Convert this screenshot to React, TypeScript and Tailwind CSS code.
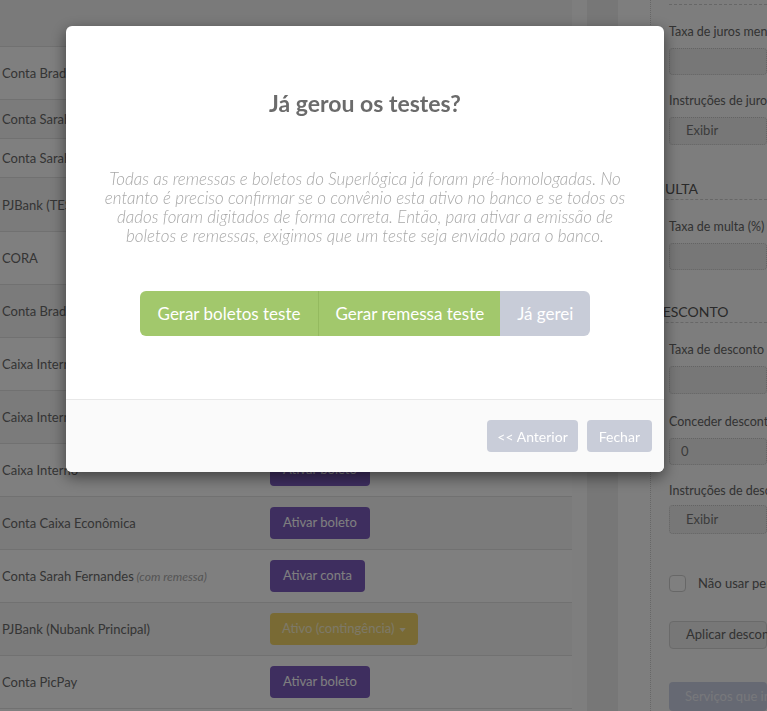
import React from "react";

type Row = {
  name: string;
  note?: string;
  action?: "boleto" | "conta" | "ativo";
  h: string;
};

const ROWS: Row[] = [
  { name: "Conta Bradesco", action: "boleto", h: "h-[53px]" },
  { name: "Conta Sarah Fernandes", h: "h-[39px]" },
  { name: "Conta Sarah Fernandes", h: "h-[39px]" },
  { name: "PJBank (TESTE)", action: "boleto", h: "h-[54px]" },
  { name: "CORA", action: "boleto", h: "h-[53px]" },
  { name: "Conta Bradesco", action: "boleto", h: "h-[53px]" },
  { name: "Caixa Interno", action: "boleto", h: "h-[53px]" },
  { name: "Caixa Interno", action: "boleto", h: "h-[53px]" },
  { name: "Caixa Interno", action: "boleto", h: "h-[53px]" },
  { name: "Conta Caixa Econômica", action: "boleto", h: "h-[53px]" },
  { name: "Conta Sarah Fernandes", note: "(com remessa)", action: "conta", h: "h-[53px]" },
  { name: "PJBank (Nubank Principal)", action: "ativo", h: "h-[53px]" },
  { name: "Conta PicPay", action: "boleto", h: "h-[53px]" },
];

const RowAction: React.FC<{ action?: Row["action"] }> = ({ action }) => {
  if (!action) return null;
  if (action === "ativo") {
    return (
      <span className="h-[32px] px-[12px] rounded bg-[#f2d568] text-white/70 text-[13px] flex items-center gap-[5px]">
        Ativo (contingência)
        <svg width="7" height="4" viewBox="0 0 8 5" className="mt-[1px]">
          <path d="M0 0h8L4 5z" fill="currentColor" />
        </svg>
      </span>
    );
  }
  return (
    <span className="h-[32px] px-[13px] rounded bg-[#7c5cbf] text-white text-[13px] flex items-center">
      {action === "conta" ? "Ativar conta" : "Ativar boleto"}
    </span>
  );
};

const Label: React.FC<{ children: React.ReactNode; className?: string }> = ({ children, className }) => (
  <div className={`pl-[18px] text-[12.5px] leading-[16px] text-[#666] whitespace-nowrap ${className ?? ""}`}>{children}</div>
);

const Field: React.FC<{ children?: React.ReactNode; className?: string }> = ({ children, className }) => (
  <div
    className={`ml-[18px] h-[30px] border border-dotted border-[#c9c9c9] bg-[#efefef] rounded-sm flex items-center text-[13px] text-[#777] whitespace-nowrap ${className ?? ""}`}
  >
    {children}
  </div>
);

const App: React.FC = () => {
  return (
    <div className="relative h-[711px] w-[767px] overflow-hidden bg-white font-['Lato','Noto_Sans',sans-serif]">
      {/* Page behind the modal */}
      <div className="flex h-full">
        {/* Account table */}
        <div className="w-[572px] flex flex-col">
          <div className="h-[47px] bg-[#f4f4f4] border-b border-[#e2e2e2]" />
          {ROWS.map((r, i) => (
            <div
              key={i}
              className={`flex items-center border-b border-[#e2e2e2] ${r.h} ${i % 2 === 1 ? "bg-[#f6f6f6]" : "bg-white"}`}
            >
              <div className="w-[270px] pl-[2px] pt-[2px] text-[13px] text-[#6a6a6a] whitespace-nowrap">
                {r.name}
                {r.note && <span className="italic text-[12px] text-[#aaa]"> {r.note}</span>}
              </div>
              <RowAction action={r.action} />
            </div>
          ))}
        </div>

        {/* Gutters */}
        <div className="w-[15px] bg-[#fcfcfc]" />
        <div className="w-[31px] bg-[#efefef]" />
        <div className="w-[32px] bg-[#fcfcfc]" />

        {/* Settings panel */}
        <div className="flex-1 flex flex-col border-l border-dotted border-[#cfcfcf] bg-[#fafafa] overflow-hidden">
          <div className="mt-[4px] ml-[18px] border-t border-dashed border-[#cfcfcf]" />
          <Label className="mt-[19px]">Taxa de juros mensal (%)</Label>
          <Field className="mt-[8px]" />
          <Label className="mt-[18px]">Instruções de juros</Label>
          <Field className="mt-[8px] pl-[16px]">Exibir</Field>

          <div className="mt-[35px] pl-[1px] pb-[2px] text-[14px] leading-[17px] text-[#555] border-b border-dashed border-[#cfcfcf]">
            MULTA
          </div>
          <Label className="mt-[19px]">Taxa de multa (%)</Label>
          <Field className="mt-[8px]" />

          <div className="mt-[33px] pl-[1px] pb-[2px] text-[14px] leading-[17px] text-[#555] border-b border-dashed border-[#cfcfcf]">
            DESCONTO
          </div>
          <Label className="mt-[19px]">Taxa de desconto (%)</Label>
          <Field className="mt-[8px]" />
          <Label className="mt-[20px]">Conceder desconto até</Label>
          <Field className="mt-[8px] pl-[11px]">0</Field>
          <Label className="mt-[18px]">Instruções de desconto</Label>
          <Field className="mt-[6px] h-[32px] pl-[16px]">Exibir</Field>

          <div className="mt-[40px] ml-[18px] flex items-center gap-[12px] whitespace-nowrap">
            <span className="w-[17px] h-[17px] shrink-0 rounded-sm border border-[#cfcfcf] bg-white" />
            <span className="text-[13px] text-[#666]">Não usar percentual</span>
          </div>
          <div className="mt-[27px] ml-[18px] h-[31px] pl-[16px] rounded border border-[#d5d5d5] bg-[#eeeeee] flex items-center text-[13px] text-[#666] whitespace-nowrap">
            Aplicar desconto
          </div>
          <div className="mt-[33px] ml-[18px] h-[32px] pl-[16px] rounded bg-[#cdd2e6] flex items-center text-[13px] text-white/70 whitespace-nowrap">
            Serviços que incidem
          </div>
        </div>
      </div>

      {/* Modal backdrop */}
      <div className="fixed inset-0 bg-black/50">
        <div className="ml-[66px] mt-[26px] w-[598px] rounded-md bg-white shadow-[0_5px_15px_rgba(0,0,0,0.5)] overflow-hidden">
          <div className="h-[373px] flex flex-col items-center pt-[63px]">
            <h3 className="text-[23px] leading-[28px] font-bold text-[#6b6b6b]">Já gerou os testes?</h3>
            <p className="mt-[52px] w-[530px] text-center italic font-light text-[17px] leading-[19px] text-[#a8a8a8]">
              Todas as remessas e boletos do Superlógica já foram pré-homologadas. No entanto é preciso confirmar se o
              convênio esta ativo no banco e se todos os dados foram digitados de forma correta. Então, para ativar a
              emissão de boletos e remessas, exigimos que um teste seja enviado para o banco.
            </p>
            <div className="mt-[46px] flex rounded-md overflow-hidden text-[17px] text-white">
              <button className="h-[45px] px-[18px] bg-[#a2c86c]">Gerar boletos teste</button>
              <button className="h-[45px] px-[16px] bg-[#a2c86c] border-l border-[#94ba5f]">Gerar remessa teste</button>
              <button className="h-[45px] px-[17px] bg-[#c8ccd8]">Já gerei</button>
            </div>
          </div>
          <div className="h-[73px] border-t border-[#e8e8e8] bg-[#fafafa] flex justify-end items-start gap-[9px] pt-[20px] pr-[12px]">
            <button className="h-[32px] px-[10px] rounded bg-[#c9cdd9] text-white text-[14px]">&lt;&lt; Anterior</button>
            <button className="h-[32px] px-[12px] rounded bg-[#c9cdd9] text-white text-[14px]">Fechar</button>
          </div>
        </div>
      </div>
    </div>
  );
};

export default App;
